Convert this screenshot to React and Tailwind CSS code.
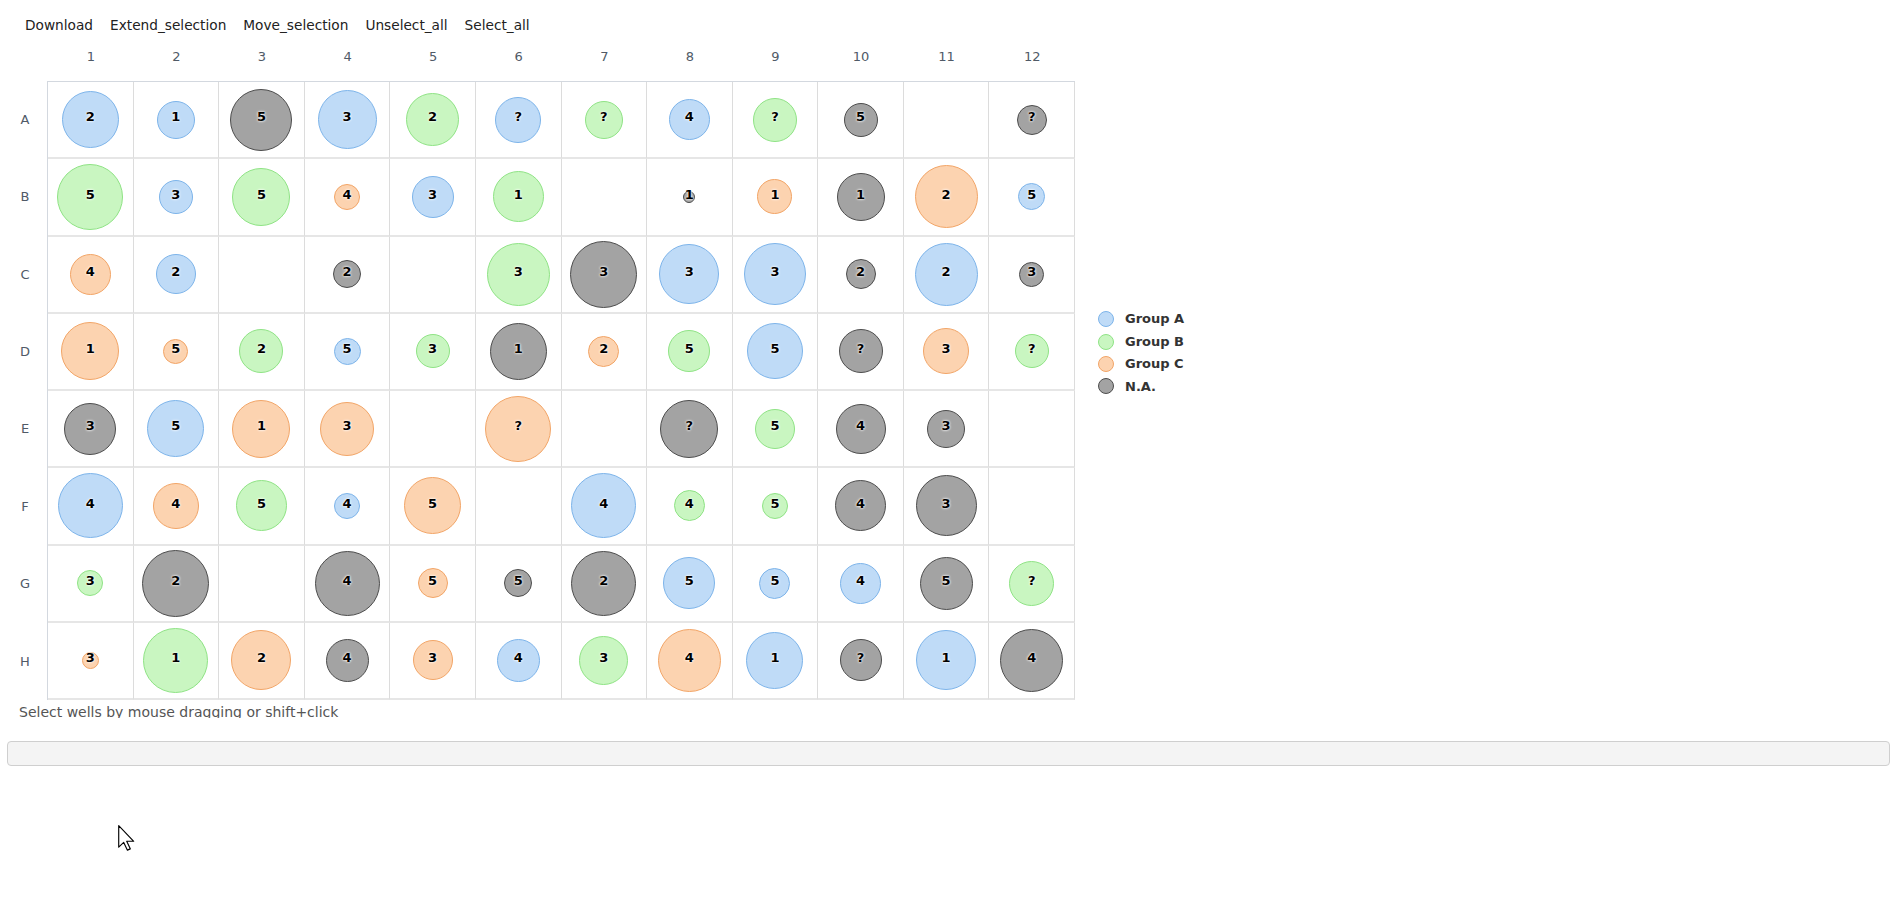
import React from 'react'

const MENU = ['Download', 'Extend_selection', 'Move_selection', 'Unselect_all', 'Select_all']
const ROW_NAMES = ['A', 'B', 'C', 'D', 'E', 'F', 'G', 'H']

// group, label, diameter (px)
const WELLS = [
  [['A', 2, 57], ['A', 1, 38], ['N', 5, 62], ['A', 3, 59], ['B', 2, 53], ['A', '?', 46], ['B', '?', 38], ['A', 4, 41], ['B', '?', 44], ['N', 5, 34], null, ['N', '?', 30]],
  [['B', 5, 66], ['A', 3, 34], ['B', 5, 58], ['C', 4, 26], ['A', 3, 42], ['B', 1, 51], null, ['N', 1, 12], ['C', 1, 35], ['N', 1, 48], ['C', 2, 63], ['A', 5, 27]],
  [['C', 4, 41], ['A', 2, 40], null, ['N', 2, 28], null, ['B', 3, 63], ['N', 3, 67], ['A', 3, 60], ['A', 3, 62], ['N', 2, 30], ['A', 2, 63], ['N', 3, 25]],
  [['C', 1, 58], ['C', 5, 25], ['B', 2, 44], ['A', 5, 27], ['B', 3, 34], ['N', 1, 57], ['C', 2, 31], ['B', 5, 42], ['A', 5, 56], ['N', '?', 44], ['C', 3, 46], ['B', '?', 34]],
  [['N', 3, 52], ['A', 5, 57], ['C', 1, 58], ['C', 3, 54], null, ['C', '?', 66], null, ['N', '?', 58], ['B', 5, 40], ['N', 4, 50], ['N', 3, 38], null],
  [['A', 4, 65], ['C', 4, 46], ['B', 5, 51], ['A', 4, 26], ['C', 5, 57], null, ['A', 4, 65], ['B', 4, 31], ['B', 5, 26], ['N', 4, 51], ['N', 3, 61], null],
  [['B', 3, 26], ['N', 2, 67], null, ['N', 4, 65], ['C', 5, 30], ['N', 5, 28], ['N', 2, 65], ['A', 5, 52], ['A', 5, 31], ['A', 4, 41], ['N', 5, 53], ['B', '?', 45]],
  [['C', 3, 17], ['B', 1, 65], ['C', 2, 60], ['N', 4, 43], ['C', 3, 40], ['A', 4, 43], ['B', 3, 49], ['C', 4, 63], ['A', 1, 57], ['N', '?', 42], ['A', 1, 60], ['N', 4, 63]],
]

const GROUP_STYLE = {
  A: 'bg-[#bfdbf7] border-[#7db4ea]',
  B: 'bg-[#c9f6c1] border-[#8fe385]',
  C: 'bg-[#fcd3b0] border-[#f2a567]',
  N: 'bg-[#a3a3a3] border-[#4d4d4d]',
}

const LEGEND = [
  ['A', 'Group A'],
  ['B', 'Group B'],
  ['C', 'Group C'],
  ['N', 'N.A.'],
]

function Well({ well }) {
  if (!well) return null
  const [group, label, size] = well
  return (
    <>
      <div className={`rounded-full border ${GROUP_STYLE[group]}`} style={{ width: size, height: size }} />
      <span className="absolute inset-0 flex items-center justify-center pb-[5px] text-[13px] font-bold text-black [text-shadow:0_0_2px_#fff,0_0_3px_#fff]">
        {label}
      </span>
    </>
  )
}

export default function App() {
  return (
    <div className="relative h-[916px] w-full overflow-hidden bg-white font-['DejaVu_Sans',sans-serif]">
      {/* menu */}
      <div className="flex h-[50px] items-center gap-[17px] pl-[25px] text-[13.7px] text-[#222]">
        {MENU.map(m => (
          <span key={m}>{m}</span>
        ))}
      </div>

      {/* column numbers */}
      <div className="flex h-[31px]">
        <div className="w-[47px] shrink-0" />
        <div className="grid w-[1028px] grid-cols-12 pl-px">
          {Array.from({ length: 12 }, (_, i) => (
            <div key={i} className="text-center text-[13px] leading-[14px] text-[#505a67]">
              {i + 1}
            </div>
          ))}
        </div>
      </div>

      {/* plate + legend */}
      <div className="flex">
        <div className="grid h-[619px] w-[47px] shrink-0 grid-rows-8">
          {ROW_NAMES.map(r => (
            <div key={r} className="flex items-center justify-center pl-[3px] text-[13px] text-[#505a67]">
              {r}
            </div>
          ))}
        </div>

        <div className="grid h-[619px] w-[1028px] shrink-0 grid-cols-12 grid-rows-8 border-l border-t border-[#d3d8df]">
          {WELLS.map((row, ri) =>
            row.map((well, ci) => (
              <div
                key={`${ri}-${ci}`}
                className="relative flex items-center justify-center border-r border-b-2 border-r-[#dcdcdc] border-b-[#e6e6e6]"
              >
                <Well well={well} />
              </div>
            ))
          )}
        </div>

        <div className="ml-[23px] mt-[227px] flex flex-col">
          {LEGEND.map(([g, name]) => (
            <div key={g} className="flex h-[22.4px] items-center gap-[11px]">
              <div className={`h-[16px] w-[16px] rounded-full border ${GROUP_STYLE[g]}`} />
              <span className="text-[13px] font-bold text-[#333]">{name}</span>
            </div>
          ))}
        </div>
      </div>

      {/* hint */}
      <div className="h-[18px] overflow-hidden pl-[19px] pt-[2px] text-[14px] leading-[20px] text-[#555]">
        Select wells by mouse dragging or shift+click
      </div>

      {/* empty bar */}
      <div className="ml-[7px] mr-[4px] mt-[23px] h-[25px] rounded-[4px] border border-[#cfcfcf] bg-[#f4f4f4]" />

      {/* mouse pointer */}
      <svg className="absolute left-[118px] top-[825px]" width="18" height="26" viewBox="0 0 12.6 18.2">
        <path d="M0.5 0.5 L0.5 15.5 L4 12.2 L6.6 17.6 L8.6 16.7 L6.1 11.4 L11 11.4 Z" fill="#fff" stroke="#000" strokeWidth="0.8" strokeLinejoin="round" />
      </svg>
    </div>
  )
}
